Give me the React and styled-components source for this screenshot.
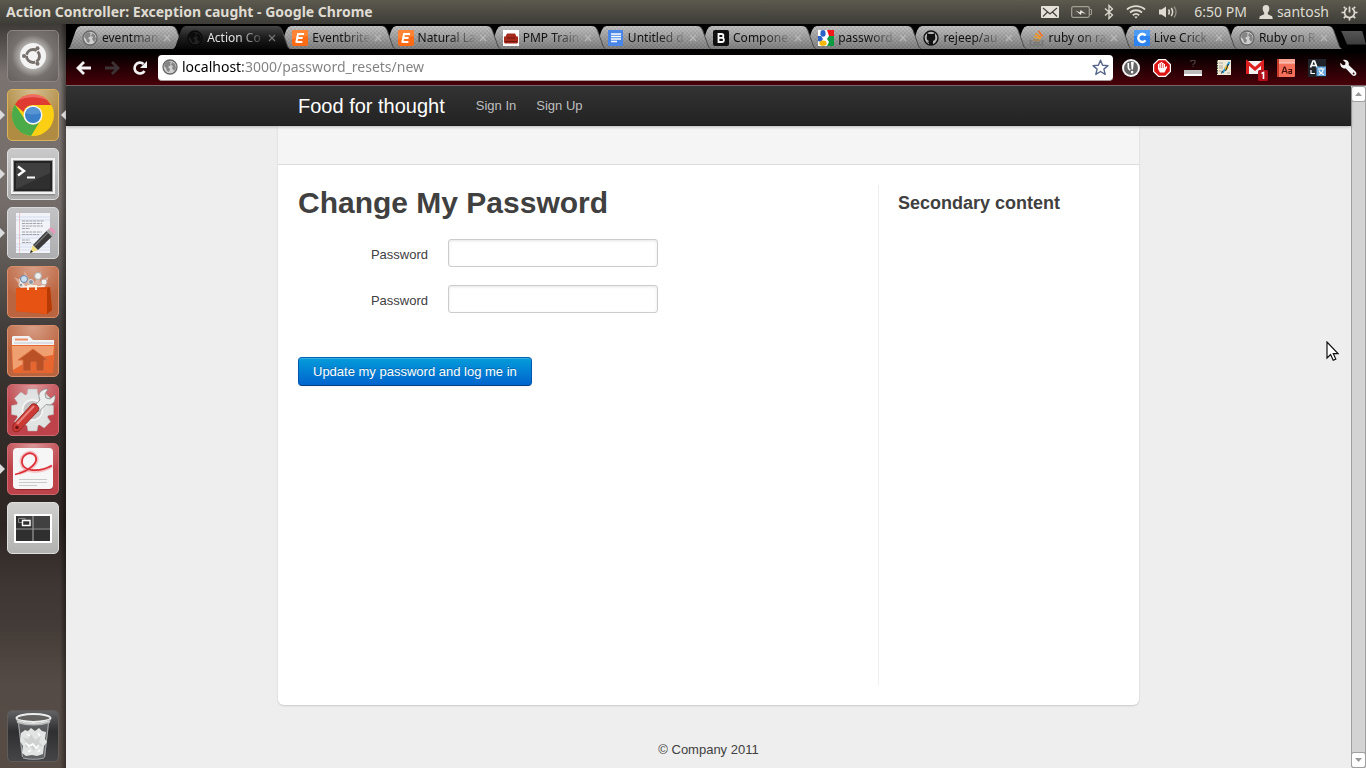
import React from "react";
import styled, { createGlobalStyle, css } from "styled-components";

const GlobalStyle = createGlobalStyle`
  *, *::before, *::after { box-sizing: border-box; }
  body { margin: 0; background: #eee; overflow-x: hidden; }
  button { margin: 0; padding: 0; border: 0; background: none; font: inherit; color: inherit; cursor: pointer; }
  svg { display: block; flex: none; }
`;

const systemFont = `"Noto Sans", "Open Sans", sans-serif`;
const pageFont = `"Liberation Sans", Arial, sans-serif`;

/* ---------- desktop ---------- */

const Desktop = styled.div`
  position: relative;
  display: flex;
  flex-direction: column;
  min-height: 100vh;
  font-family: ${systemFont};
`;

const MenuBar = styled.header`
  display: flex;
  align-items: center;
  justify-content: space-between;
  height: 24px;
  padding: 0 8px 0 6px;
  background: linear-gradient(#5c5a4e, #3d3c37);
  color: #dfdbd2;
  font-size: 14px;
  line-height: 24px;
`;

const WindowTitle = styled.span`
  font-size: 14px;
  font-weight: 700;
  white-space: nowrap;
`;

const Tray = styled.div`
  display: flex;
  align-items: center;
  gap: 12px;
`;

const TrayItem = styled.button`
  display: flex;
  align-items: center;
  gap: 4px;
  padding-left: ${(p) => (p.$clock ? "4px" : "0")};
  line-height: 24px;
`;

const Workspace = styled.div`
  display: flex;
  flex: 1;
`;

const Launcher = styled.nav`
  display: flex;
  flex-direction: column;
  flex: none;
  gap: 7px;
  width: 66px;
  padding: 6px 7px;
  background:
    linear-gradient(to right, transparent 60px, #00000059 65px),
    linear-gradient(#3e3a37 0, #7a736f 50px, #736c68 180px, #5a5450 250px, #443f3c 300px, #342d2a 380px, #2c2522 500px, #3d3632 560px, #433b37 600px, #554b46 660px, #574c45 100%);
`;

const LauncherButton = styled.button`
  position: relative;
  display: grid;
  place-items: center;
  flex: none;
  width: 52px;
  height: 52px;
  border: 1px solid ${(p) => p.$edge};
  border-radius: 5px;
  background: ${(p) => p.$fill};
  margin-top: ${(p) => (p.$last ? "auto" : "0")};
  ${(p) => p.$running && css`
    &::before {
      content: "";
      position: absolute;
      left: -8px;
      top: 20px;
      border: 5px solid transparent;
      border-left-color: #dcdcdc;
    }
  `}
  ${(p) => p.$focused && css`
    &::after {
      content: "";
      position: absolute;
      right: -8px;
      top: 20px;
      border: 5px solid transparent;
      border-right-color: #dcdcdc;
    }
  `}
`;

/* ---------- browser ---------- */

const Browser = styled.section`
  display: flex;
  flex: 1;
  flex-direction: column;
  min-width: 0;
`;

const Chrome = styled.div`
  background: linear-gradient(#000 0, #000 28px, #490009 61px);
  border-bottom: 1px solid #796c6e;
`;

const TabStrip = styled.div`
  display: flex;
  align-items: center;
  padding: 2px 0 1px 2px;
  isolation: isolate;
`;

const tabShape = css`
  clip-path: polygon(0 100%, 2px 21px, 8px 4px, 10px 1px, 13px 0, calc(100% - 13px) 0, calc(100% - 10px) 1px, calc(100% - 8px) 4px, calc(100% - 2px) 21px, 100% 100%);
`;

const Tab = styled.div`
  position: relative;
  z-index: ${(p) => p.$z};
  display: flex;
  flex: 1;
  align-items: center;
  gap: 2px;
  min-width: 0;
  height: 23px;
  margin-right: -11px;
  padding: 0 12px 0 14px;
  color: ${(p) => (p.$active ? "#e2e2e2" : "#111")};
  filter: drop-shadow(1px 0 0 #4a4a4a);
  &:last-of-type { margin-right: 0; }
  &::before {
    content: "";
    position: absolute;
    inset: 0;
    z-index: -1;
    background: ${(p) => p.$active
      ? "linear-gradient(#454545, #1c1c1c 50%, #060606)"
      : "linear-gradient(#ffffff30, #00000048), repeating-conic-gradient(#a2a2a2 0 25%, #b2b2b2 0 50%) 0 0 / 4px 4px"};
    ${tabShape}
  }
`;

const TabLabel = styled.button`
  display: flex;
  flex: 1;
  align-items: center;
  gap: 4px;
  min-width: 0;
  font-size: 12px;
  line-height: 22px;
  text-align: left;
`;

const TabText = styled.span`
  flex: 1;
  min-width: 0;
  overflow: hidden;
  white-space: nowrap;
  mask-image: linear-gradient(to right, #000 calc(100% - 28px), #0003 calc(100% - 4px), transparent);
`;

const CloseButton = styled.button`
  color: ${(p) => (p.$active ? "#777" : "#b9b9b9")};
`;

const NewTab = styled.button`
  width: 25px;
  height: 14px;
  background: linear-gradient(#555, #3c3c3c);
  clip-path: polygon(0 0, 84% 0, 100% 100%, 24% 100%);
`;

const Toolbar = styled.div`
  display: flex;
  align-items: center;
  gap: 8px;
  height: 35px;
  padding: 0 8px 0 10px;
`;

const NavButtons = styled.div`
  display: flex;
  gap: 12px;
  margin-right: 2px;
`;

const NavButton = styled.button`
  color: ${(p) => (p.disabled ? "#3c3335" : "#f2f2f2")};
`;

const Omnibox = styled.form`
  display: flex;
  flex: 1;
  align-items: center;
  gap: 4px;
  height: 26px;
  padding: 0 4px;
  border-radius: 4px;
  border-bottom: 1px solid #a89a9b;
  background: #fff;
`;

const Address = styled.input`
  flex: 1;
  min-width: 0;
  padding: 0;
  border: 0;
  outline: 0;
  font: 14px/22px ${systemFont};
  color: #808080;
  background: linear-gradient(to right, #000 61px, #808080 61px);
  background-clip: text;
  -webkit-text-fill-color: transparent;
`;

const Extensions = styled.div`
  display: flex;
  gap: 11px;
`;

const Viewport = styled.div`
  display: flex;
  flex: 1;
  background: #eee;
`;

const ScrollBar = styled.div`
  display: flex;
  flex-direction: column;
  flex: none;
  justify-content: space-between;
  width: 15px;
  border: 1px solid #a0a0a0;
  border-top-color: #d3d3d3;
  border-radius: 3px;
  background: #d3d3d3;
`;

const ScrollArrow = styled.button`
  display: grid;
  place-items: center;
  height: 14px;
  background: #fff;
  border-radius: 2px;
  box-shadow: 0 0 0 1px #a0a0a0;
`;

/* ---------- page ---------- */

const Page = styled.div`
  flex: 1;
  min-width: 0;
  font: 13px/18px ${pageFont};
  color: #404040;
`;

const TopBar = styled.div`
  position: relative;
  height: 40px;
  background: linear-gradient(#333, #222);
  box-shadow: 0 1px 3px #00000040, inset 0 -1px 0 #0000001a;
`;

const Container = styled.div`
  display: flex;
  align-items: center;
  max-width: 821px;
  margin: 0 auto;
`;

const Brand = styled.a`
  padding-right: 21px;
  color: #fff;
  font-size: 20px;
  line-height: 38px;
  text-decoration: none;
`;

const NavLink = styled.a`
  padding: 0 10px;
  color: #bfbfbf;
  line-height: 40px;
  text-decoration: none;
`;

const Content = styled.div`
  max-width: 861px;
  margin: 0 auto;
  padding-bottom: 20px;
  border-radius: 0 0 6px 6px;
  background: #fff;
  box-shadow: 0 1px 2px #00000026;
`;

const PageHeader = styled.div`
  height: 39px;
  border-bottom: 1px solid #ddd;
  background: #f5f5f5;
`;

const Columns = styled.div`
  display: flex;
  min-height: 520px;
  padding: 20px 20px 0;
`;

const Main = styled.main`
  flex: 0 1 580px;
`;

const Sidebar = styled.aside`
  width: 240px;
  padding-left: 19px;
  border-left: 1px solid #eee;
`;

const Heading = styled.h1`
  margin: 0 0 18px;
  font-size: 30px;
  line-height: 36px;
`;

const SideHeading = styled.h3`
  margin: 0;
  font-size: 18px;
  line-height: 36px;
`;

const Field = styled.div`
  display: flex;
  gap: 20px;
  margin-bottom: 18px;
`;

const Label = styled.label`
  width: 130px;
  padding-top: 7px;
  text-align: right;
`;

const TextBox = styled.input`
  width: 210px;
  height: 28px;
  padding: 4px;
  border: 1px solid #ccc;
  border-radius: 3px;
  outline: 0;
  background: #fff;
  box-shadow: inset 0 1px 3px #0000001a;
  font: 13px/18px ${pageFont};
`;

const SubmitButton = styled.button`
  height: 29px;
  margin-top: 26px;
  padding: 0 14px;
  border: 1px solid #0055b3;
  border-color: #0064b4 #0058b0 #003f81;
  border-radius: 4px;
  background: linear-gradient(#049cdb, #0064cd);
  box-shadow: inset 0 1px 0 #ffffff33, 0 1px 2px #0000000d;
  color: #fff;
  text-shadow: 0 -1px 0 #00000040;
`;

const Footer = styled.footer`
  padding: 36px 0 8px;
  text-align: center;
`;

const Pointer = styled.svg`
  position: absolute;
  right: 27px;
  top: 341px;
  pointer-events: none;
`;

/* ---------- favicons ---------- */

const Globe = ({ dark }) => (
  <svg width="16" height="16" viewBox="0 0 16 16">
    <circle cx="8" cy="8" r="7" fill={dark ? "#222" : "#cfcfcf"} stroke={dark ? "#090909" : "#666"} strokeWidth="1.3" />
    <path d="M3 4 6 2l3 1-1 2 1 1-3 2 2 2-1 3-2-1-1-3-2-2zM10 3l3 2 1 4-2 3-2-3 1-2-2-1z" fill={dark ? "#0b0b0b" : "#858585"} />
  </svg>
);

const Eventbrite = () => (
  <svg width="16" height="16" viewBox="0 0 16 16">
    <rect width="16" height="16" rx="2" fill="#ff6a14" />
    <path d="M0 2a2 2 0 0 1 2-2h12a2 2 0 0 1 2 2v4L0 9z" fill="#ff8434" />
    <path d="M6 3.9h6M5.2 8h5.4M4.4 12.1h6M6.2 3.3 4.2 12.7" fill="none" stroke="#fff" strokeWidth="2" />
  </svg>
);

const Couch = () => (
  <svg width="16" height="16" viewBox="0 0 16 16">
    <path fill="#fff" d="M0 0h16v16H0z" />
    <path d="M4 3.5h8l1.5 3H15v6l-1 1H2l-1-1v-6h1.5z" fill="#a62a1b" />
    <path d="M4 8h8M2 11.5h12" stroke="#701509" />
  </svg>
);

const Doc = () => (
  <svg width="16" height="16" viewBox="0 0 16 16">
    <path fill="#4a86e8" d="M0 0h15v16H0z" />
    <path d="M3 4h10M3 6.5h10M3 9h10M3 11.5h6" stroke="#fff" strokeWidth="1.3" />
  </svg>
);

const Bootstrap = () => (
  <svg width="16" height="16" viewBox="0 0 16 16">
    <rect width="16" height="16" rx="2" fill="#111" />
    <path d="M5.5 4h3a1.8 1.8 0 0 1 0 3.8h-3zM5.5 7.8h3.3a2 2 0 0 1 0 4.2H5.5z" fill="none" stroke="#fff" strokeWidth="1.8" />
  </svg>
);

const GoogleIcon = () => (
  <svg width="16" height="16" viewBox="0 0 16 16">
    <path fill="#fff" d="M0 0h16v16H0z" />
    <path fill="#f31919" d="M9 0h7v6h-5z" />
    <path fill="#0c9b40" d="M11 6h5v10H9l2-4-2-3z" />
    <path fill="#2a62c8" d="M0 6h3l2 3-2 3-3-1z" />
    <ellipse cx="5" cy="3.4" rx="2.6" ry="3.3" fill="#2a62c8" />
    <ellipse cx="5" cy="13.2" rx="3.6" ry="2.6" fill="#f6b70b" />
  </svg>
);

const Github = () => (
  <svg width="16" height="16" viewBox="0 0 16 16">
    <circle cx="8" cy="8" r="7" fill="#b6b6b6" stroke="#111" strokeWidth="1.4" />
    <path d="M4 3l2 1h4l2-1v3c1 3-.5 4.5-2 5v4H6v-2l-2-1 2-.5V11C4 10.500 3 8.500 4 6z" fill="#111" />
  </svg>
);

const StackOverflow = () => (
  <svg width="16" height="16" viewBox="0 0 16 16" fill="none" strokeWidth="1.7">
    <path d="M1.500 10v5h12v-5" stroke="#777" />
    <path d="M4 12.700h7" stroke="#777" />
    <path d="M4 9.800l7 .8" stroke="#a8865a" />
    <path d="M4.800 6.500l6.800 2.300" stroke="#e9a030" />
    <path d="M6.500 3.500l5.700 4" stroke="#f5921e" />
    <path d="M9.500 1l4 5.200" stroke="#f0702a" />
  </svg>
);

const Cricket = () => (
  <svg width="16" height="16" viewBox="0 0 16 16">
    <rect width="16" height="16" rx="1" fill="#2d84f0" />
    <path d="M0 0h16v6H0z" fill="#4b9cf7" />
    <path d="M11.500 5.600A4 4 0 1 0 11.500 10.400" fill="none" stroke="#fff" strokeWidth="2.400" />
  </svg>
);

const CloseIcon = () => (
  <svg width="10" height="10" viewBox="0 0 10 10" fill="none" stroke="currentColor" strokeWidth="1.200">
    <path d="M2 2l6 6M8 2l-6 6" />
  </svg>
);

/* ---------- toolbar icons ---------- */

const Back = () => (
  <svg width="16" height="16" viewBox="0 0 16 16" fill="none" stroke="currentColor" strokeWidth="2.800">
    <path d="M15 8H2.500M8 2 2 8l6 6" />
  </svg>
);
const Forward = () => (
  <svg width="16" height="16" viewBox="0 0 16 16" fill="none" stroke="currentColor" strokeWidth="2.800">
    <path d="M1 8h12.500M8 2l6 6-6 6" />
  </svg>
);
const Reload = () => (
  <svg width="16" height="16" viewBox="0 0 16 16">
    <path d="M12.500 11A5.400 5.400 0 1 1 11.500 4" fill="none" stroke="currentColor" strokeWidth="2.700" />
    <path d="M15 1v7H8z" fill="currentColor" />
  </svg>
);
const Star = () => (
  <svg width="17" height="17" viewBox="0 0 17 17">
    <path d="M8.500 1.200l2.100 5 5.400.4-4.100 3.500 1.300 5.300-4.700-2.900-4.700 2.900 1.300-5.300L1 6.600l5.400-.4z" fill="#fff" stroke="#56658a" strokeWidth="1.400" strokeLinejoin="round" />
  </svg>
);

const extensions = [
  ["Reader", (
    <svg width="20" height="20" viewBox="0 0 20 20">
      <circle cx="10" cy="10" r="9" fill="#f4f4f4" />
      <circle cx="10" cy="10" r="7" fill="#666" />
      <path d="M7.300 5v4.500a3 3 0 0 0 2 2.500" fill="none" stroke="#fff" strokeWidth="1.600" />
      <path d="M10 4h2.800l-.8 7.500h-1.500zM10 13h2.200v2.200H10z" fill="#fff" />
    </svg>
  )],
  ["AdBlock", (
    <svg width="20" height="20" viewBox="0 0 20 20">
      <path d="M6.300 1h7.400L19 6.300v7.400L13.700 19H6.300L1 13.700V6.300z" fill="#fff" />
      <path d="M6.800 2.200h6.400l4.600 4.600v6.400l-4.600 4.600H6.800l-4.600-4.600V6.800z" fill="#dc1414" />
      <path d="M6 9V6h1.300V5h1.400V4h1.500v1h1.500v1H13v3.500l1.500-1.500.8 1-2.800 5.500H8L6 11z" fill="#fff" />
      <path d="M7.800 6v4M9.500 5v5M11.300 6v4" stroke="#dc1414" strokeWidth=".6" />
    </svg>
  )],
  ["Rank", (
    <svg width="20" height="20" viewBox="0 0 20 20">
      <path d="M8 4V2.500h4V5l-2 1.500V7M10 8v1" fill="none" stroke="#4b3f40" strokeWidth="1.200" />
      <path d="M1 12h18v6H1z" fill="#fff" />
      <path d="M1 12h18v4H1z" fill="#bdbdbd" />
    </svg>
  )],
  ["Notes", (
    <svg width="20" height="20" viewBox="0 0 20 20">
      <path d="M3 2h14v15H3z" fill="#eee8d4" />
      <path d="M5 5h4M5 8h4M5 10h4M5 13h5M13 15h3" stroke="#999" strokeWidth=".8" />
      <path d="M3 2v15" stroke="#111" strokeWidth="1.500" strokeDasharray="1.500 1" />
      <path d="M15.500 4 8.500 15" stroke="#2c9bd3" strokeWidth="2" />
      <path d="M10.500 9l3-2 1 3-3 3z" fill="#f3c530" />
      <path d="M14.500 6l-3 7M8.500 13l-1 2.500" stroke="#222" />
    </svg>
  )],
  ["Mail, 1 unread", (
    <svg width="20" height="20" viewBox="0 0 20 20" overflow="visible">
      <path d="M1 3h18v13H1z" fill="#f2f2f2" />
      <path d="M2.500 16V4.500L10 11l7.500-6.500V16" fill="none" stroke="#dd1f1f" strokeWidth="3" />
      <rect x="13" y="12" width="10" height="11" rx="1.500" fill="#b1101a" />
      <path d="M16.500 15.500l2-1V21" fill="none" stroke="#fff" strokeWidth="1.600" />
    </svg>
  )],
  ["Dictionary", (
    <svg width="20" height="20" viewBox="0 0 20 20">
      <rect x="1" y="1" width="18" height="18" rx="1" fill="#f4705a" />
      <path d="M3 1h16v4H3z" fill="#f9a593" />
      <path d="M3 5h16" stroke="#fbd1c7" />
      <path d="M2 1v18" stroke="#c43a28" strokeWidth="2" />
      <path d="M6 15.500 8.200 9h.8l2.200 6.500M6.800 13.500h3.600M12.500 11.500h3v4h-2.500v-2h2.500" fill="none" stroke="#4a1009" strokeWidth="1.200" />
    </svg>
  )],
  ["Translate", (
    <svg width="20" height="20" viewBox="0 0 20 20">
      <path d="M1 1h18v18H1z" fill="#20242a" />
      <path d="M3.500 9.500 6 3h1.500L10 9.500M4.500 7.500h4.600" fill="none" stroke="#fff" strokeWidth="1.700" />
      <path d="M4 12v3.500h4" fill="none" stroke="#fff" strokeWidth="1.200" />
      <path d="M9.500 8.500h9.500V18H9.500z" fill="#67a6dd" />
      <path d="M11 11h6.500M14.200 9.500V11M12 16.500c2.500-1 4-3 4.300-5.500M12 12.500c.8 2 2.500 3.500 5 4" fill="none" stroke="#fff" strokeWidth="1.100" />
    </svg>
  )],
  ["Settings", (
    <svg width="20" height="20" viewBox="0 0 20 20">
      <path d="M2.300 4.800 5 7.200l2.200-.5.300-2.200-2.600-2.400c2.800-1 5.800.5 6 3.400l-.2 1.600 6.800 6.400c2.500 2.700-.6 6-3.200 3.700L7.900 10.400c-3 .9-6.200-1.800-5.600-5.600z" fill="#f1f1f1" />
      <circle cx="15.600" cy="15.500" r=".9" fill="#3a050a" />
    </svg>
  )],
];

/* ---------- tray icons ---------- */

const MailIcon = () => (
  <svg width="18" height="12" viewBox="0 0 18 12">
    <rect width="18" height="12" rx="1" fill="#e6e2da" />
    <path d="M2 2l7 6 7-6M2 10.500 6.500 6M16 10.500 11.500 6" fill="none" stroke="#45433d" strokeWidth="1.200" />
  </svg>
);
const BatteryIcon = () => (
  <svg width="21" height="12" viewBox="0 0 21 12">
    <rect x=".7" y=".7" width="17.600" height="10.600" rx="1.500" fill="none" stroke="#a19e94" strokeWidth="1.300" />
    <path d="M3 3h13v6H3z" fill="#55534b" />
    <path d="M19 3.500h1.500v5H19" fill="none" stroke="#a19e94" />
    <path d="M4.500 4.500 9 6.500 9.500 4l5.500 4-4.500-1.500L10 9z" fill="#f2efe8" />
  </svg>
);
const BluetoothIcon = () => (
  <svg width="10" height="16" viewBox="0 0 10 16">
    <path d="M1 4.500 8.500 11 5 14.500v-13L8.500 5 1 11.500" fill="none" stroke="#dfdbd2" strokeWidth="1.300" />
  </svg>
);
const WifiIcon = () => (
  <svg width="20" height="14" viewBox="0 0 20 14" fill="none" stroke="#dfdbd2" strokeWidth="1.800">
    <path d="M1 4.500c5-4.500 13-4.500 18 0M4 7.500c3.500-3 8.500-3 12 0M6.800 10.300c2-1.700 4.400-1.700 6.400 0" />
    <path d="M8.300 11.500h3.400L10 13.800z" fill="#dfdbd2" stroke="none" />
  </svg>
);
const SoundIcon = () => (
  <svg width="20" height="16" viewBox="0 0 20 16" fill="none" strokeWidth="1.500">
    <path d="M1 5.500h2.500L8 2.500v11l-4.500-3H1z" fill="#dfdbd2" />
    <path d="M10.500 5.500q1.800 2.500 0 5M13.200 4q2.800 4 0 8" stroke="#dfdbd2" />
    <path d="M16 2.500q4 5.500 0 11" stroke="#8b887d" />
  </svg>
);
const UserIcon = () => (
  <svg width="14" height="14" viewBox="0 0 14 14">
    <path d="M7 0c2.500 0 3.500 1.800 3.300 4-.2 2-.9 3-1.500 3.700v1.600l4.400 2 .6 2.700H.2l.6-2.700 4.400-2V7.700C4.600 7 3.900 6 3.700 4 3.500 1.800 4.500 0 7 0z" fill="#dfdbd2" />
  </svg>
);
const PowerIcon = () => (
  <svg width="17" height="17" viewBox="0 0 17 17" fill="none" stroke="#dfdbd2">
    <path d="M6 4.300a5 5 0 1 0 5 0" strokeWidth="1.700" />
    <path d="M8.500 2.500v6" strokeWidth="1.700" />
    <path d="M8.500 13.500v3M3.500 8.500H.5M16.500 8.500h-3M4.800 12.200l-2 2M12.200 12.200l2 2M4.500 4.500l-1.700-1.700M12.500 4.500l1.700-1.700" strokeWidth="1.700" />
  </svg>
);

/* ---------- launcher icons ---------- */

const DashIcon = () => (
  <svg width="48" height="48" viewBox="0 0 48 48">
    <defs>
      <radialGradient id="dashGlow"><stop offset=".5" stopColor="#fff" stopOpacity=".5" /><stop offset="1" stopColor="#fff" stopOpacity="0" /></radialGradient>
    </defs>
    <circle cx="24" cy="24" r="21" fill="url(#dashGlow)" />
    <circle cx="24" cy="24" r="13" fill="#f3f3f3" />
    <circle cx="24" cy="24" r="6.500" fill="none" stroke="#77706c" strokeWidth="2.800" strokeDasharray="12.600 1" strokeDashoffset="6" />
    <circle cx="15" cy="24" r="2" fill="#77706c" />
    <circle cx="28.500" cy="16.200" r="2" fill="#77706c" />
    <circle cx="28.500" cy="31.800" r="2" fill="#77706c" />
  </svg>
);

const ChromeIcon = () => (
  <svg width="46" height="46" viewBox="0 0 46 46">
    <circle cx="23" cy="23" r="21" fill="#fbcf14" />
    <path d="M4.800 12.500A21 21 0 0 1 41.200 13H23a10 10 0 0 0-9.500 7z" fill="#e03b33" />
    <path d="M8 8.500A21 21 0 0 1 38.500 8.800C30 4 16 4 8 8.500z" fill="#f0837c" opacity=".7" />
    <path d="M4.800 12.500A21 21 0 0 0 21 44l8.500-14a9.500 9.500 0 0 1-15-3z" fill="#4bab48" />
    <circle cx="23" cy="23" r="9.500" fill="#f4f7fb" />
    <circle cx="23" cy="23" r="8" fill="#3a7fc8" />
    <path d="M15.500 21a8 8 0 0 1 15 0q-7 3-15 0z" fill="#6aa2dc" opacity=".6" />
  </svg>
);

const TerminalIcon = () => (
  <svg width="46" height="46" viewBox="0 0 46 46">
    <path d="M1 7.500h44v37H1z" fill="#8d8d8d" />
    <path d="M1 7h44v36H1z" fill="#f1f1f1" />
    <path d="M3 9h40v32H3z" fill="#9a9a9a" />
    <path d="M4 10h38v30H4z" fill="#242424" />
    <path d="M6 12h34v26H6z" fill="#3e3f3e" />
    <path d="M6 38 40 22v16z" fill="#2e2f2e" />
    <path d="M8 15.500l6 4.500-6 4.500" fill="none" stroke="#fff" strokeWidth="2.400" />
    <path d="M17 26.500h8" stroke="#fff" strokeWidth="2" />
  </svg>
);

const EditorIcon = () => (
  <svg width="46" height="46" viewBox="0 0 46 46">
    <path d="M6 4h34v40H6z" fill="#a9a9ad" />
    <path d="M6 3h34v40H6z" fill="#f1f3f8" />
    <path d="M6 7h34M6 10h34M6 25h34M6 28h34M6 34h34M6 37h34M6 40h34" stroke="#c6d4ec" strokeWidth=".7" />
    <path d="M9.500 3v40" stroke="#e7b0b6" strokeWidth=".7" />
    <path d="M12 11h22M12 13.500h20M12 16h21M12 18.500h8M12 22h20M12 24.500h17M12 30h8M12 32.500h9" stroke="#8b8e95" strokeWidth=".8" strokeDasharray="3 .7" />
    <path d="M20 43 23 35l5 5z" fill="#f0dd7e" />
    <path d="M20 43l1-3 2 2z" fill="#222" />
    <path d="M23 35 36.500 21l5.500 5.500L28 40z" fill="#3a3a3a" />
    <path d="M24.500 36 38 22.500" stroke="#777" strokeWidth="1.200" />
    <path d="M36.500 21l2-2 5.500 5.500-2 2z" fill="#aaa" />
    <path d="M38.500 19l2-1.500q3 0 5 4L44 24.500z" fill="#e59abb" />
  </svg>
);

const SoftwareIcon = () => (
  <svg width="46" height="46" viewBox="0 0 46 46">
    <path d="M4 8 23 17 39 7 33 18H11zM14 2l9 14 8-14-2 16H16z" fill="#fff" opacity=".35" />
    <path d="M9 9 15 17h16l7-8-4 12H11z" fill="#fff" opacity=".75" />
    <circle cx="14" cy="10" r="3.500" fill="#c9dcec" stroke="#6384ad" />
    <circle cx="28" cy="7" r="3.500" fill="#eee" stroke="#aaa" />
    <circle cx="21" cy="13" r="2.500" fill="#8a939e" stroke="#ddd" />
    <circle cx="34" cy="13" r="3" fill="#f1f1f1" stroke="#b9a39a" />
    <circle cx="11" cy="16" r="2" fill="#999" stroke="#eee" />
    <path d="M6 19 40 18 42 41 37 45 6 42z" fill="#d8480c" />
    <path d="M6 19l31 1v25L6 42z" fill="#e75313" />
    <path d="M37 20l3-2 2 23-5 4z" fill="#b63a05" />
    <path d="M18 21v-4h8v4" fill="none" stroke="#fff0dc" strokeWidth="1.800" />
  </svg>
);

const FolderIcon = () => (
  <svg width="46" height="46" viewBox="0 0 46 46">
    <path d="M2 19V9l1-1h16l4 4h21v8z" fill="#f2f3f5" />
    <path d="M5 11.500h13" stroke="#ef8f66" strokeWidth="2" />
    <path d="M4 15h39" stroke="#c4c7cf" />
    <path d="M1 17h44l-2 28H3z" fill="#e8652e" />
    <path d="M2 18h42l-1 9Q22 29 3 42z" fill="#f0a070" />
    <path d="M23 21 38 32h-4v11h-8v-9h-5v9h-8V32H8z" fill="#ba5126" stroke="#d96d3e" />
  </svg>
);

const gearTeeth = [0, 45, 90, 135, 180, 225, 270, 315];
const ToolsIcon = () => (
  <svg width="48" height="48" viewBox="0 0 48 48">
    {gearTeeth.map((a) => (
      <path key={a} d="M19 3h9l1.500 8h-12z" fill="#dfe0e0" stroke="#b6b6b6" strokeWidth=".5" transform={`rotate(${a} 23.500 24)`} />
    ))}
    <circle cx="23.500" cy="24" r="16.500" fill="#e2e3e3" />
    <circle cx="23.500" cy="24" r="10" fill="#c8c5c5" stroke="#f7f7f7" strokeWidth="1.500" />
    <path d="M25 20 31 14q-4-8 5-11l3 0-3 5 1 4 4 1 5-4q1 8-5 10l-4-.5-7 7z" fill="#eceded" stroke="#888" strokeWidth=".8" />
    <path d="M4 39 23 18q3-1 5 1l2 3q0 2-1 3L10 45q-5 2-6-1z" fill="#cb3a35" stroke="#8e1c1b" strokeWidth=".8" />
    <path d="M8 38 25 20" stroke="#e8847d" strokeWidth="2" />
    <circle cx="8" cy="41.500" r="1.800" fill="#6e1513" />
  </svg>
);

const ReaderIcon = () => (
  <svg width="46" height="46" viewBox="0 0 46 46">
    <rect x="4" y="4" width="39" height="40" rx="4" fill="#7f1d22" opacity=".6" />
    <rect x="3" y="2" width="40" height="41" rx="4" fill="#f6f6f6" />
    <path d="M9 27C23 24 30 15 25.500 9.500 20 3 10 9 11.500 17c1 9 17 11 30.500 3" fill="none" stroke="#f4c0c2" strokeWidth="3.500" />
    <path d="M5 28.500C20 25 29.500 16 25 9.500 20 4 11 9 12 17c1 8 17 10 30 2.500" fill="none" stroke="#dc3038" strokeWidth="1.700" />
    <path d="M9 33.500h28M9 36.500h28M9 39.500h18" stroke="#c9c9c9" />
  </svg>
);

const WorkspaceIcon = () => (
  <svg width="46" height="46" viewBox="0 0 46 46">
    <rect x="4" y="9" width="38" height="29" rx="1" fill="#fff" />
    <path d="M6 11h34v25H6z" fill="#2f2f2f" />
    <path d="M6 11h34v12H24z" fill="#414141" />
    <path d="M23 11v25M6 24h34" stroke="#9b9b9b" strokeWidth="1.200" />
    <path d="M8.500 13.500h6.500v4H8.500z" fill="none" stroke="#888" />
    <path d="M12.500 15.500h7.500v5h-7.500z" fill="#333" stroke="#fff" strokeWidth="1.400" />
  </svg>
);

const TrashIcon = () => (
  <svg width="46" height="48" viewBox="0 0 46 48">
    <path d="M8 11h31l-4 35q-11 3-22 0z" fill="#8a8c8d" opacity=".45" />
    <path d="M8.500 11 12.500 45M38.500 11 34.500 45M13 46q11 2.500 21 0" fill="none" stroke="#a2a4a4" strokeWidth="1.200" />
    <path d="M11 21l4-3 3 1 3-3 4 3 4-3 3 3 4 1-1 7 2 3-3 4-1 8-6 2-5-1-6 1-4-3 1-7-3-5z" fill="#e2e3e3" />
    <path d="M13 25l5 2 3-5 4 6 6-4-2 6 4 4-6 1-3 4-4-5-5 2 1-5z" fill="#cfd1d1" />
    <path d="M16 31l3 3 4-2 3 4 3-3M17 22l3 2M28 21l2 3M18 40l3-2M28 40l2-2" fill="none" stroke="#fff" strokeWidth="1.500" />
    <ellipse cx="23.500" cy="6" rx="17" ry="4" fill="#63615f" stroke="#eceded" strokeWidth="2" />
    <path d="M6.500 7q17 8 34 0l-.5 4q-16.500 5-33 0z" fill="#b4b6b6" />
    <path d="M8 9q15 5 31 0" fill="none" stroke="#e5e5e5" strokeWidth="1" />
  </svg>
);

const silver = "linear-gradient(#c9c9c9, #adadad)";
const red = "radial-gradient(circle at 50% 0, #d9989a, #bd4249 60%)";
const orange = "radial-gradient(circle at 50% 0, #d8a088, #bb6540 60%)";

const apps = [
  { name: "Dash home", icon: <DashIcon />, fill: "radial-gradient(#8f8a87, #65605d)", edge: "#8b8683" },
  { name: "Google Chrome", icon: <ChromeIcon />, fill: "radial-gradient(circle at 50% 0, #d3bf94, #b08b42 60%)", edge: "#dbb25e", running: true, focused: true },
  { name: "Terminal", icon: <TerminalIcon />, fill: silver, edge: "#dedede", running: true },
  { name: "Text Editor", icon: <EditorIcon />, fill: "linear-gradient(#c3c3c5, #aeaeb1)", edge: "#d9d9dc", running: true },
  { name: "Software Center", icon: <SoftwareIcon />, fill: orange, edge: "#d98e6e" },
  { name: "Home Folder", icon: <FolderIcon />, fill: orange, edge: "#d98e6e" },
  { name: "System Settings", icon: <ToolsIcon />, fill: red, edge: "#cf6a70" },
  { name: "Document Viewer", icon: <ReaderIcon />, fill: red, edge: "#cf6a70", running: true },
  { name: "Workspace Switcher", icon: <WorkspaceIcon />, fill: "linear-gradient(#cfcfcd, #b2b2b0)", edge: "#dededc" },
  { name: "Trash", icon: <TrashIcon />, fill: "linear-gradient(#626163, #2f2e30 40%, #454446)", edge: "#5e5b59", last: true },
];

const tabs = [
  ["eventman", <Globe />],
  ["Action Co", <Globe dark />],
  ["Eventbrite", <Eventbrite />],
  ["Natural La", <Eventbrite />],
  ["PMP Train", <Couch />],
  ["Untitled d", <Doc />],
  ["Compone", <Bootstrap />],
  ["password", <GoogleIcon />],
  ["rejeep/au", <Github />],
  ["ruby on ra", <StackOverflow />],
  ["Live Crick", <Cricket />],
  ["Ruby on R", <Globe />],
];

export default function App() {
  return (
    <Desktop>
      <GlobalStyle />
      <MenuBar>
        <WindowTitle>Action Controller: Exception caught - Google Chrome</WindowTitle>
        <Tray>
          <TrayItem aria-label="Messages"><MailIcon /></TrayItem>
          <TrayItem aria-label="Battery"><BatteryIcon /></TrayItem>
          <TrayItem aria-label="Bluetooth"><BluetoothIcon /></TrayItem>
          <TrayItem aria-label="Network"><WifiIcon /></TrayItem>
          <TrayItem aria-label="Sound"><SoundIcon /></TrayItem>
          <TrayItem $clock>6:50 PM</TrayItem>
          <TrayItem><UserIcon />santosh</TrayItem>
          <TrayItem aria-label="Session"><PowerIcon /></TrayItem>
        </Tray>
      </MenuBar>
      <Workspace>
        <Launcher aria-label="Launcher">
          {apps.map((a) => (
            <LauncherButton key={a.name} aria-label={a.name} $fill={a.fill} $edge={a.edge} $running={a.running} $focused={a.focused} $last={a.last}>
              {a.icon}
            </LauncherButton>
          ))}
        </Launcher>
        <Browser>
          <Chrome>
            <TabStrip>
              {tabs.map(([text, icon], i) => {
                const active = i === 1;
                return (
                  <Tab key={text} $active={active} $z={active ? 20 : 12 - i}>
                    <TabLabel>{icon}<TabText>{text}</TabText></TabLabel>
                    <CloseButton aria-label={`Close ${text}`} $active={active}><CloseIcon /></CloseButton>
                  </Tab>
                );
              })}
              <NewTab aria-label="New tab" />
            </TabStrip>
            <Toolbar>
              <NavButtons>
                <NavButton aria-label="Back"><Back /></NavButton>
                <NavButton aria-label="Forward" disabled><Forward /></NavButton>
                <NavButton aria-label="Reload"><Reload /></NavButton>
              </NavButtons>
              <Omnibox onSubmit={(e) => e.preventDefault()}>
                <Globe />
                <Address aria-label="Address" defaultValue="localhost:3000/password_resets/new" />
                <button type="button" aria-label="Bookmark"><Star /></button>
              </Omnibox>
              <Extensions>
                {extensions.map(([name, icon]) => (
                  <button key={name} aria-label={name}>{icon}</button>
                ))}
              </Extensions>
            </Toolbar>
          </Chrome>
          <Viewport>
            <Page>
              <TopBar>
                <Container>
                  <Brand href="#">Food for thought</Brand>
                  <NavLink href="#">Sign In</NavLink>
                  <NavLink href="#">Sign Up</NavLink>
                </Container>
              </TopBar>
              <Content>
                <PageHeader />
                <Columns>
                  <Main>
                    <Heading>Change My Password</Heading>
                    <form onSubmit={(e) => e.preventDefault()}>
                      <Field>
                        <Label htmlFor="password">Password</Label>
                        <TextBox id="password" type="password" />
                      </Field>
                      <Field>
                        <Label htmlFor="password-confirmation">Password</Label>
                        <TextBox id="password-confirmation" type="password" />
                      </Field>
                      <SubmitButton>Update my password and log me in</SubmitButton>
                    </form>
                  </Main>
                  <Sidebar>
                    <SideHeading>Secondary content</SideHeading>
                  </Sidebar>
                </Columns>
              </Content>
              <Footer>© Company 2011</Footer>
            </Page>
            <ScrollBar>
              <ScrollArrow aria-label="Scroll up">
                <svg width="7" height="4" viewBox="0 0 7 4"><path d="M0 4 3.500 0 7 4z" fill="#999" /></svg>
              </ScrollArrow>
              <ScrollArrow aria-label="Scroll down">
                <svg width="7" height="4" viewBox="0 0 7 4"><path d="M0 0h7L3.500 4z" fill="#999" /></svg>
              </ScrollArrow>
            </ScrollBar>
          </Viewport>
        </Browser>
      </Workspace>
      <Pointer width="13" height="21" viewBox="0 0 13 21">
        <path d="M1 1v16l3.600-3.400 2.600 5.700 2.600-1.200-2.500-5.500H12z" fill="#fff" stroke="#111" strokeWidth="1.200" />
      </Pointer>
    </Desktop>
  );
}
